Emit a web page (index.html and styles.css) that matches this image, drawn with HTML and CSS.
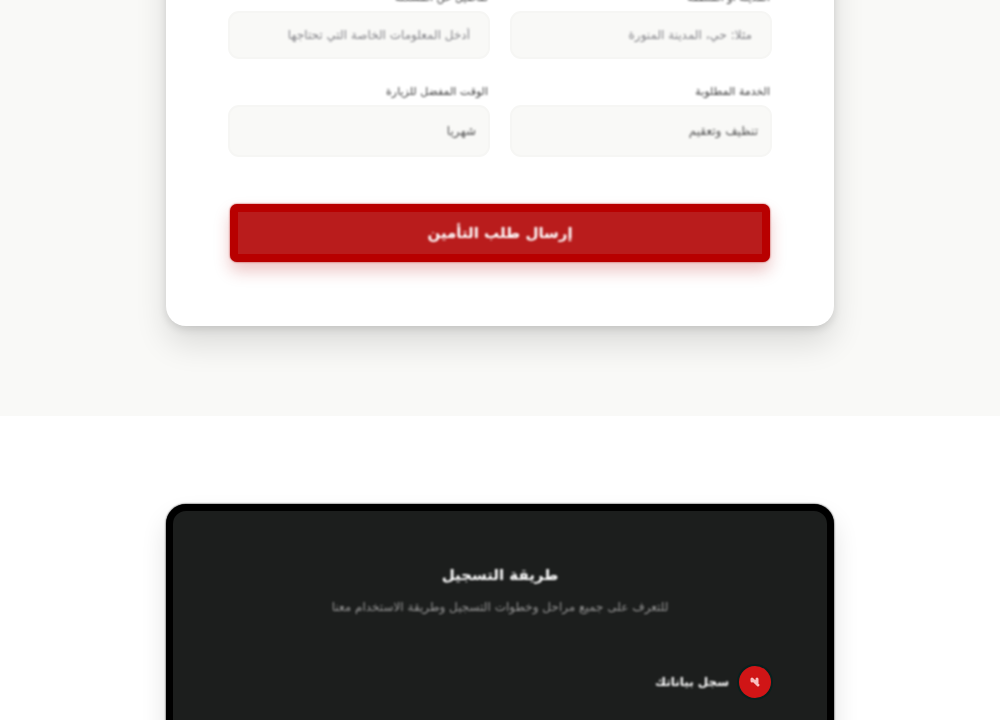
FILE: index.html
```html
<!DOCTYPE html>
<html lang="ar" dir="rtl">
<head>
<meta charset="utf-8">
<meta name="viewport" content="width=device-width, initial-scale=1">
<title>إرسال طلب</title>
<link rel="stylesheet" href="styles.css">
</head>
<body>
<main class="page">
  <section class="request">
    <form class="card form-card">
      <div class="grid">
        <div class="field">
          <label class="soft" for="city">المدينة أو المنطقة</label>
          <div class="control"><input class="soft" id="city" type="text" placeholder="مثلا: حي، المدينة المنورة"></div>
        </div>
        <div class="field">
          <label class="soft" for="details">تفاصيل عن المشكلة</label>
          <div class="control"><input class="soft" id="details" type="text" placeholder="أدخل المعلومات الخاصة التي تحتاجها"></div>
        </div>
        <div class="field">
          <label class="soft" for="service">الخدمة المطلوبة</label>
          <div class="control tall"><select class="soft" id="service"><option>تنظيف وتعقيم</option></select></div>
        </div>
        <div class="field">
          <label class="soft" for="period">الوقت المفضل للزيارة</label>
          <div class="control tall"><select class="soft" id="period"><option>شهريا</option></select></div>
        </div>
      </div>
      <button class="submit" type="button"><span class="soft">إرسال طلب التأمين</span></button>
    </form>
  </section>
  <section class="guide">
    <div class="card guide-card">
      <h2 class="soft">طريقة التسجيل</h2>
      <p class="lead soft">للتعرف على جميع مراحل وخطوات التسجيل وطريقة الاستخدام معنا</p>
      <div class="step">
        <svg class="badge" viewBox="0 0 36 36" aria-hidden="true">
          <circle cx="18" cy="18" r="18" fill="#08201e"/>
          <circle cx="18" cy="18" r="16" fill="#d01516"/>
          <path d="M15 15l6 6M15 15v2M20 15v5" fill="none" stroke="#ffdede" stroke-width="3" stroke-linecap="round" opacity=".85"/>
        </svg>
        <h3 class="soft">سجل بياناتك</h3>
      </div>
    </div>
  </section>
</main>
</body>
</html>
```
FILE: styles.css
```css
* { box-sizing: border-box; }
body { margin: 0; font-family: "DejaVu Sans", sans-serif; background: #fff; color: #555; }
.page { height: 100vh; overflow: hidden; display: flow-root; }
.soft { filter: blur(1px); }
.card { width: 100%; max-width: 668px; margin: 0 auto; border-radius: 20px; }
.request { margin-top: -76px; padding: 0 16px 90px; background: #f9f9f7; }
.form-card { padding: 64px 62px; background: #fff; box-shadow: 0 18px 32px rgba(0, 0, 0, .12), 0 3px 8px rgba(0, 0, 0, .12); }
.grid { display: grid; grid-template-columns: 1fr 1fr; column-gap: 20px; row-gap: 23px; }
.field { display: flex; flex-direction: column; gap: 3px; }
.field label { padding: 0 2px; font-size: 11px; line-height: 20px; color: #444; }
.control { display: flex; height: 48px; border: 2px solid #f6f6f4; border-radius: 11px; background: #f9f9f7; }
.control.tall { height: 52px; }
.control input, .control select { width: 100%; margin: 0; padding: 0 18px; border: 0; outline: 0; appearance: none; background: transparent; font-family: inherit; font-size: 12px; color: #555; }
.control select { padding: 0 12px; }
.control input::placeholder { color: #85858a; opacity: 1; }
.submit { display: block; width: calc(100% - 4px); height: 58px; margin: 47px auto 0; border: 8px solid #b80000; border-radius: 7px; background: #b91c1c; box-shadow: 0 9px 16px rgba(185, 28, 28, .25), 0 0 2px #b91c1c; color: #fff; font-family: inherit; font-size: 15px; font-weight: 700; }
.submit span { display: block; }
.guide { padding: 88px 16px 0; }
.guide-card { min-height: 300px; padding: 50px 54px; border: 7px solid #000; background: #1c1e1d; box-shadow: 0 14px 26px rgba(0, 0, 0, .12), 0 0 2px #000; color: #fff; text-align: center; }
.guide-card h2 { margin: 0; font-size: 15px; line-height: 28px; }
.lead { margin: 4px 0 0; font-size: 12px; line-height: 28px; color: #969696; }
.step { display: flex; align-items: center; gap: 8px; margin-top: 43px; }
.badge { width: 36px; height: 36px; }
.step h3 { margin: 0; font-size: 12px; line-height: 24px; }
```
